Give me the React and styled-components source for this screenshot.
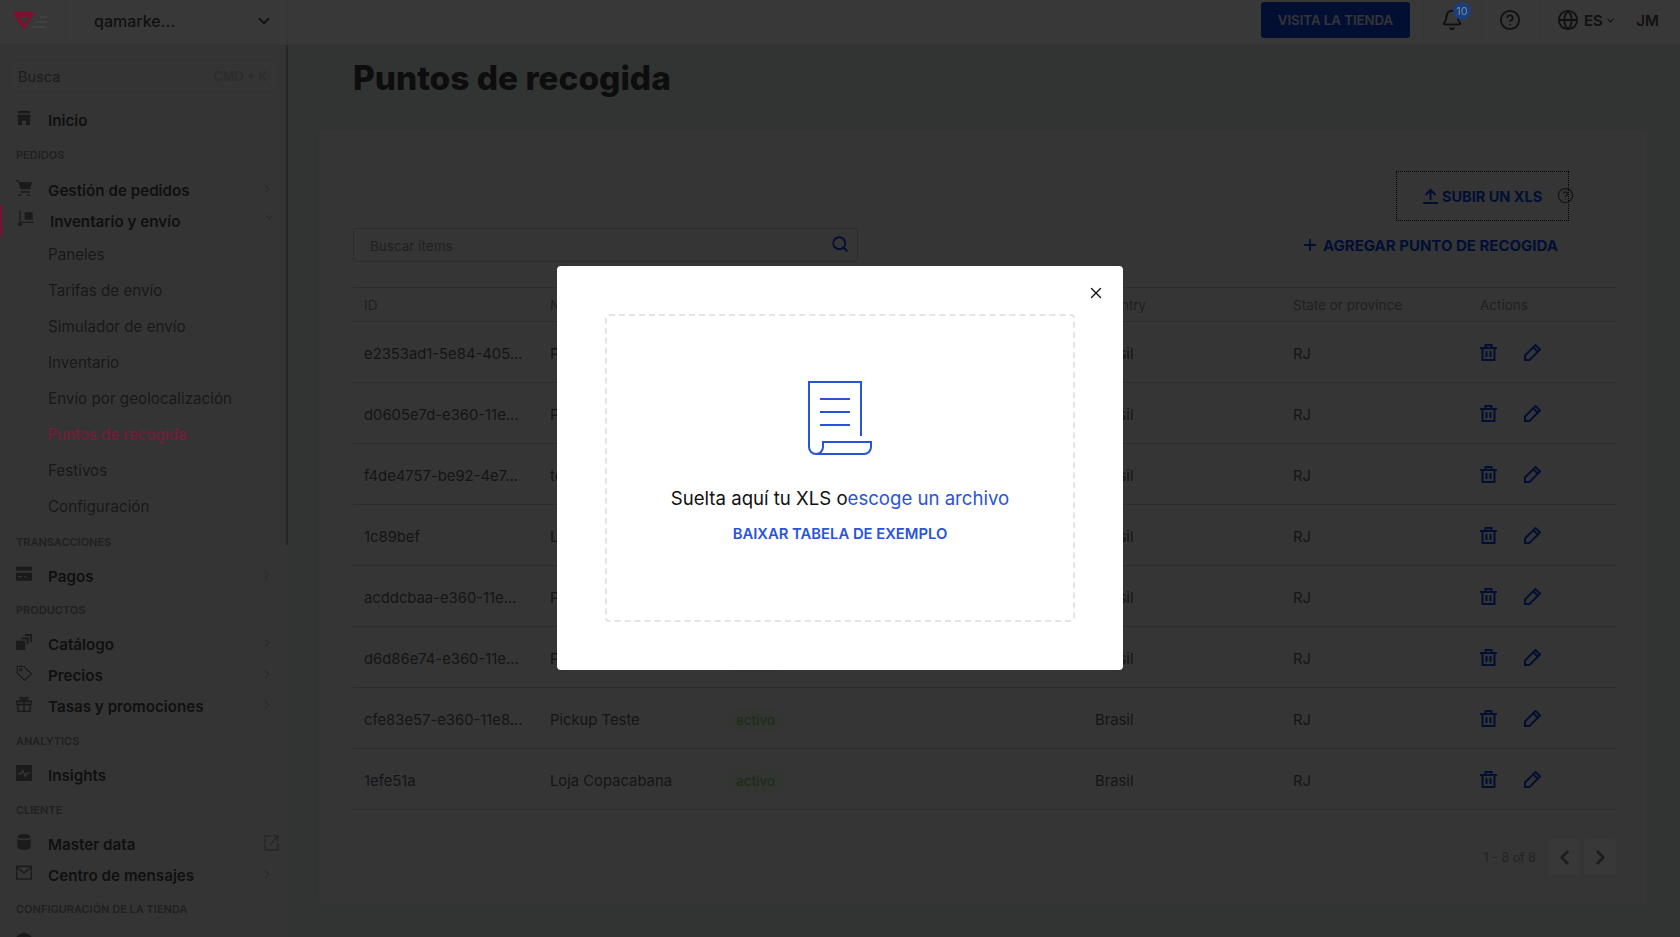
import styled, { createGlobalStyle } from "styled-components";
import { ChevronDown, ChevronRight, ChevronLeft, Search, X, Globe, CircleHelp, Bell, Plus } from "lucide-react";

const GlobalStyle = createGlobalStyle`
  html, body { margin: 0; padding: 0; height: 100%; overflow: hidden; }
  body { font-family: Inter, "Noto Sans", sans-serif; background: #e4ece8; color: #4d4d4d; }
  * { box-sizing: border-box; }
`;

const ICONS = {
  shop: <path fill="currentColor" d="M3 1h18v4H3zM2 7h20v4H21v12h-6v-7H9v7H3V11H2z" />,
  cart: <path fill="currentColor" d="M0 0h4l1 3h19l-3 11H7L3 2H0zM7 17h14v2H7zM8 24a2.4 2.4 0 1 1 0-.1zM21 24a2.4 2.4 0 1 1 0-.1z" />,
  shelves: <path fill="currentColor" d="M2 0h2v18H2zM10 2h12v11H10zM5 16h19v2H5zM3 23a3 3 0 1 1 0-6 3 3 0 0 1 0 6z" />,
  card: <path fill="currentColor" d="M0 1h24v6H0zM0 10h24v12H0zM3 15v2h6v-2zM12 15v2h3v-2z" />,
  catalog: <g fill="currentColor"><path d="M0 10h14v14H0z" /><path d="M8 5h11v10h-3V8H8zM13 0h11v12h-3V3h-8z" /></g>,
  tag: <g fill="none" stroke="currentColor" strokeWidth="2"><path d="M2 2h10l11 11-10 10L2 12z" /><circle cx="7" cy="7" r="1.5" /></g>,
  gift: <g fill="none" stroke="currentColor" strokeWidth="2.4"><path d="M1 8h22v5H1zM3 13v10h18V13M12 8v15M12 7C6 7 5 2 8 2s4 3 4 5zm0 0c6 0 7-5 4-5s-4 3-4 5z" /></g>,
  insights: <g><path fill="currentColor" d="M0 0h24v24H0z" /><path fill="none" stroke="#ffffff" strokeWidth="1.8" d="M3 13h5l2-5 4 9 2-5h5" /></g>,
  data: <path fill="currentColor" d="M12 0c6 0 10 1.5 10 3.5S18 7 12 7 2 5.500 2 3.500 6 0 12 0zM2 7c2 1.500 6 2.500 10 2.500S20 8.500 22 7v13c0 2-4 4-10 4S2 22 2 20z" />,
  mail: <path fill="none" stroke="currentColor" strokeWidth="2.4" d="M1 2h22v19H1zM1 3l11 9 11-9" />,
  cube: <path fill="currentColor" d="M12 0l11 6v12l-11 6-11-6V6z" />,
};

const SECTIONS = [
  { items: [{ icon: "shop", label: "Inicio" }] },
  {
    title: "PEDIDOS",
    h: 39,
    items: [
      { icon: "cart", label: "Gestión de pedidos", more: true },
      {
        icon: "shelves",
        label: "Inventario y envío",
        open: true,
        children: [
          "Paneles",
          "Tarifas de envío",
          "Simulador de envío",
          "Inventario",
          "Envío por geolocalización",
          "Puntos de recogida",
          "Festivos",
          "Configuración",
        ],
      },
    ],
  },
  { title: "TRANSACCIONES", h: 37, items: [{ icon: "card", label: "Pagos", more: true }] },
  {
    title: "PRODUCTOS",
    h: 37,
    items: [
      { icon: "catalog", label: "Catálogo", more: true },
      { icon: "tag", label: "Precios", more: true },
      { icon: "gift", label: "Tasas y promociones", more: true },
    ],
  },
  { title: "ANALYTICS", h: 38, items: [{ icon: "insights", label: "Insights" }] },
  {
    title: "CLIENTE",
    h: 38,
    items: [
      { icon: "data", label: "Master data", external: true },
      { icon: "mail", label: "Centro de mensajes", more: true },
    ],
  },
  { title: "CONFIGURACIÓN DE LA TIENDA", h: 36, items: [{ icon: "cube", label: "" }] },
];

const ROWS = [
  ["e2353ad1-5e84-405...", "Pickup Barra", "Brasil"],
  ["d0605e7d-e360-11e...", "Pickup Centro", "Brasil"],
  ["f4de4757-be92-4e7...", "teste", "Brasil"],
  ["1c89bef", "Loja Leblon", "Brasil"],
  ["acddcbaa-e360-11e...", "Pickup Tijuca", "Brasil"],
  ["d6d86e74-e360-11e...", "Pickup Ipanema", "Brasil"],
  ["cfe83e57-e360-11e8...", "Pickup Teste", "Brasil"],
  ["1efe51a", "Loja Copacabana", "Brasil"],
];

function Logo() {
  return (
    <LogoMark width="33" height="17" viewBox="0 0 33 17">
      <path fill="#7d1230" fillRule="evenodd" d="M0 0h21l-10 17h-2L0 3zM6 5l4.500 7L15 5z" />
      <path stroke="#4a4a4a" strokeWidth="1" d="M26 5h7M21 10h12M17 15h15" />
    </LogoMark>
  );
}

function TrashIcon() {
  return (
    <svg width="17" height="17" viewBox="0 0 17 17" fill="none" stroke="currentColor" strokeWidth="2">
      <path d="M0 4h17M5.500 4V1h6v3M2.500 4v12h12V4M6.500 7v6M10.500 7v6" />
    </svg>
  );
}

function PencilIcon() {
  return (
    <svg width="17" height="17" viewBox="0 0 17 17" fill="none" stroke="currentColor" strokeWidth="2">
      <path d="M1 16v-4.500L11.500 1 16 5.500 5.500 16zM9.500 3.500l4 4" />
    </svg>
  );
}

function UploadIcon() {
  return (
    <svg width="15" height="16" viewBox="0 0 15 16" fill="none" stroke="currentColor" strokeWidth="2">
      <path d="M0 15h15M7.500 12V2M2.500 7l5-5 5 5" />
    </svg>
  );
}

function ExternalIcon() {
  return (
    <svg width="15" height="16" viewBox="0 0 15 16" fill="none" stroke="currentColor" strokeWidth="1.300">
      <path d="M7 1H1v14h13V8M6 10l8-9M9 1h5v5" />
    </svg>
  );
}

function ScrollIcon() {
  return (
    <svg width="64" height="74" viewBox="0 0 64 74" fill="none" stroke="#2953da" strokeWidth="2">
      <path d="M53 55V1H1v65a7 7 0 0 0 14 0v-5h48v5a7 7 0 0 1-7 7H8" />
      <path d="M12 18h30M12 31h30M12 44h30" />
    </svg>
  );
}

export default function App() {
  return (
    <>
      <GlobalStyle />
      <Page>
        <TopBar>
          <LogoCell>
            <Logo />
          </LogoCell>
          <AccountCell>
            <AccountName>qamarke...</AccountName>
            <ChevronDown size={18} strokeWidth={2.4} />
          </AccountCell>
          <Spacer />
          <StoreButton>VISITA LA TIENDA</StoreButton>
          <IconCell>
            <Bell size={22} strokeWidth={2.2} />
            <Badge>10</Badge>
          </IconCell>
          <IconCell>
            <CircleHelp size={22} strokeWidth={2} />
          </IconCell>
          <LangCell>
            <Globe size={22} strokeWidth={2} />
            <span>ES</span>
            <LangChevron size={11} strokeWidth={2.4} />
          </LangCell>
          <UserCell>JM</UserCell>
        </TopBar>
        <Body>
          <Sidebar>
            <ScrollThumb />
            <SearchBox>
              <span>Busca</span>
              <Shortcut>CMD + K</Shortcut>
            </SearchBox>
            {SECTIONS.map((section, i) => (
              <div key={i}>
                {section.title && <SectionLabel $h={section.h}>{section.title}</SectionLabel>}
                {section.items.map((item) => (
                  <div key={item.icon}>
                    <NavRow $open={item.open}>
                      <NavIcon viewBox="0 0 24 24">{ICONS[item.icon]}</NavIcon>
                      <NavText>{item.label}</NavText>
                      {item.more && (
                        <NavArrow>
                          <ChevronRight size={14} strokeWidth={1.6} />
                        </NavArrow>
                      )}
                      {item.open && (
                        <NavArrow $down>
                          <ChevronDown size={14} strokeWidth={1.6} />
                        </NavArrow>
                      )}
                      {item.external && (
                        <ExternalSlot>
                          <ExternalIcon />
                        </ExternalSlot>
                      )}
                    </NavRow>
                    {item.children && (
                      <SubList>
                        {item.children.map((child) => (
                          <SubItem key={child} $active={child === "Puntos de recogida"}>
                            {child}
                          </SubItem>
                        ))}
                      </SubList>
                    )}
                  </div>
                ))}
              </div>
            ))}
          </Sidebar>
          <Main>
            <Title>Puntos de recogida</Title>
            <Card>
              <UploadRow>
                <UploadBox>
                  <UploadIcon />
                  <span>SUBIR UN XLS</span>
                  <UploadHelp>
                    <CircleHelp size={17} strokeWidth={2} />
                  </UploadHelp>
                </UploadBox>
              </UploadRow>
              <Toolbar>
                <SearchField>
                  <span>Buscar ítems</span>
                  <Search size={18} strokeWidth={2.4} />
                </SearchField>
                <AddButton>
                  <Plus size={18} strokeWidth={2.4} />
                  <span>AGREGAR PUNTO DE RECOGIDA</span>
                </AddButton>
              </Toolbar>
              <HeadRow>
                <div>ID</div>
                <div>Name</div>
                <div>Status</div>
                <div>Country</div>
                <div>State or province</div>
                <div>Actions</div>
              </HeadRow>
              {ROWS.map((row) => (
                <TableRow key={row[0]}>
                  <div>{row[0]}</div>
                  <div>{row[1]}</div>
                  <div>
                    <StatusPill>activo</StatusPill>
                  </div>
                  <div>{row[2]}</div>
                  <div>RJ</div>
                  <Actions>
                    <TrashIcon />
                    <PencilIcon />
                  </Actions>
                </TableRow>
              ))}
              <Pagination>
                <PageCount>1 - 8 of 8</PageCount>
                <PageButton>
                  <ChevronLeft size={23} strokeWidth={2.8} />
                </PageButton>
                <PageButton>
                  <ChevronRight size={23} strokeWidth={2.8} />
                </PageButton>
              </Pagination>
            </Card>
          </Main>
        </Body>
      </Page>
      <Overlay>
        <Modal>
          <CloseButton>
            <X size={18} strokeWidth={1.8} />
          </CloseButton>
          <DropZone>
            <ScrollIcon />
            <DropText>
              Suelta aquí tu XLS o<DropLink>escoge un archivo</DropLink>
            </DropText>
            <SampleLink>BAIXAR TABELA DE EXEMPLO</SampleLink>
          </DropZone>
        </Modal>
      </Overlay>
    </>
  );
}

const Page = styled.div`
  width: 1680px;
  height: 937px;
  display: flex;
  flex-direction: column;
  overflow: hidden;
`;

const TopBar = styled.header`
  height: 45px;
  flex: none;
  display: flex;
  align-items: stretch;
  background: #ffffff;
  border-bottom: 1px solid #f0f0f0;
`;

const LogoCell = styled.div`
  width: 66px;
  display: flex;
  align-items: center;
  padding: 0 0 7px 14px;
  border-right: 1px solid #f0f0f0;
`;

const LogoMark = styled.svg`
  position: relative;
  z-index: 11;
  margin-top: 4px;
`;

const AccountCell = styled.div`
  width: 222px;
  display: flex;
  align-items: center;
  justify-content: space-between;
  padding: 0 14px 2px 28px;
  border-right: 1px solid #f0f0f0;
  color: #4d4d4d;
`;

const AccountName = styled.span`
  font-size: 16px;
  font-weight: 500;
`;

const Spacer = styled.div`
  flex: 1;
`;

const StoreButton = styled.div`
  align-self: flex-start;
  margin: 2px 13px 0 0;
  width: 149px;
  height: 36px;
  display: flex;
  align-items: center;
  justify-content: center;
  background: #0944e8;
  border-radius: 3px;
  color: #eeeeee;
  font-size: 13.200px;
  font-weight: 600;
`;

const IconCell = styled.div`
  position: relative;
  width: 58px;
  display: flex;
  align-items: center;
  justify-content: center;
  padding: 0 2px 4px 0;
  border-left: 1px solid #f0f0f0;
  color: #4d4d4d;
`;

const Badge = styled.span`
  position: absolute;
  z-index: 11;
  top: 2px;
  left: 29px;
  width: 18px;
  height: 18px;
  border-radius: 50%;
  display: flex;
  align-items: center;
  justify-content: center;
  background: #1d3f76;
  color: #6a88b5;
  font-size: 11px;
`;

const LangCell = styled.div`
  width: 85px;
  display: flex;
  align-items: center;
  gap: 5px;
  padding: 0 0 4px 17px;
  border-left: 1px solid #f0f0f0;
  color: #4d4d4d;
  font-size: 15px;
  font-weight: 600;
`;

const LangChevron = styled(ChevronDown)`
  margin-left: -3px;
`;

const UserCell = styled.div`
  width: 56px;
  display: flex;
  align-items: center;
  justify-content: center;
  padding: 0 9px 4px 0;
  color: #4d4d4d;
  font-size: 15px;
  font-weight: 600;
`;

const Body = styled.div`
  flex: 1;
  display: flex;
  min-height: 0;
`;

const Sidebar = styled.nav`
  position: relative;
  width: 289px;
  flex: none;
  overflow: hidden;
  background: #eeeeee;
  padding-top: 14px;
`;

const ScrollThumb = styled.div`
  position: absolute;
  top: 0;
  right: 1px;
  width: 2px;
  height: 500px;
  background: #a8a8a8;
`;

const SearchBox = styled.div`
  margin: 0 9px 12px;
  width: 270px;
  height: 34px;
  display: flex;
  align-items: center;
  justify-content: space-between;
  padding: 0 11px 0 8px;
  border: 1px solid #e0e0e0;
  border-radius: 3px;
  font-size: 14.500px;
  color: #7f7f7f;
`;

const Shortcut = styled.span`
  font-size: 12.500px;
  font-weight: 600;
  color: #c8c8c8;
`;

const SectionLabel = styled.div`
  height: ${(p) => p.$h}px;
  display: flex;
  align-items: center;
  padding: 0 0 1px 16px;
  font-size: 11px;
  font-weight: 600;
  color: #909090;
  white-space: nowrap;
`;

const NavRow = styled.div`
  position: relative;
  height: 31px;
  display: flex;
  align-items: center;
  padding-left: 16px;
  color: #4a4a4a;

  ${(p) =>
    p.$open &&
    `
    &::before {
      content: "";
      position: absolute;
      z-index: 11;
      left: 0;
      top: -1px;
      width: 2px;
      height: 31px;
      background: #7a1232;
    }
    padding-left: 18px;
  `}
`;

const NavIcon = styled.svg`
  width: 16px;
  height: 16px;
  flex: none;
  margin: -6px 16px 0 0;
  color: #7a7a7a;
`;

const NavText = styled.span`
  font-size: 15.200px;
  font-weight: 600;
  white-space: nowrap;
`;

const NavArrow = styled.span`
  position: absolute;
  right: ${(p) => (p.$down ? "13px" : "15px")};
  top: ${(p) => (p.$down ? "4px" : "7px")};
  display: flex;
  color: #9a9a9a;
`;

const ExternalSlot = styled.span`
  position: absolute;
  right: 10px;
  top: 6px;
  display: flex;
  color: #a8a8a8;
`;

const SubList = styled.div`
  margin-top: -1px;
`;

const SubItem = styled.div`
  position: relative;
  ${(p) => p.$active && "z-index: 11;"}
  height: 36px;
  display: flex;
  align-items: center;
  padding-left: 48px;
  font-size: 15.200px;
  color: ${(p) => (p.$active ? "#85183a" : "#707070")};
  white-space: nowrap;
`;

const Main = styled.main`
  flex: 1;
  min-width: 0;
  background: #e4ece8;
  padding-left: 30px;
  padding-right: 33px;
`;

const Title = styled.h1`
  margin: 0;
  height: 85px;
  padding: 13px 0 0 34px;
  font-size: 33.400px;
  line-height: 40px;
  font-weight: 800;
  color: #3b3b3b;
`;

const Card = styled.section`
  height: 775px;
  background: #f1f1f1;
  border-radius: 4px;
  padding: 41px 31px 0 34px;
`;

const UploadRow = styled.div`
  display: flex;
  justify-content: flex-end;
  padding-right: 47px;
`;

const UploadBox = styled.div`
  position: relative;
  width: 173px;
  height: 50px;
  display: flex;
  align-items: center;
  gap: 4px;
  padding-left: 26px;
  border: 1px dotted #000000;
  color: #0944e8;
  font-size: 14.500px;
  font-weight: 700;
`;

const UploadHelp = styled.span`
  position: absolute;
  left: 160px;
  top: 15px;
  display: flex;
  color: #6a6a6a;
`;

const Toolbar = styled.div`
  margin-top: 7px;
  height: 34px;
  display: flex;
  align-items: center;
  justify-content: space-between;
  padding-right: 58px;
`;

const SearchField = styled.div`
  width: 505px;
  height: 34px;
  display: flex;
  align-items: center;
  justify-content: space-between;
  padding: 1px 8px 0 16px;
  border: 1px solid #c8c8c8;
  border-radius: 3px;
  font-size: 13.500px;
  color: #909090;

  svg {
    color: #0944e8;
    margin-bottom: 4px;
  }
`;

const AddButton = styled.div`
  display: flex;
  align-items: center;
  gap: 4px;
  color: #0944e8;
  font-size: 15px;
  font-weight: 700;
`;

const tableGrid = `
  display: grid;
  grid-template-columns: 186px 176px 369px 198px 187px 1fr;
  align-items: center;
  padding-left: 11px;
  border-bottom: 1px solid #c8c8c8;
`;

const HeadRow = styled.div`
  ${tableGrid}
  margin-top: 25px;
  height: 35px;
  border-top: 1px solid #c8c8c8;
  font-size: 13.500px;
  color: #909090;
`;

const TableRow = styled.div`
  ${tableGrid}
  height: 61px;
  padding-top: 3px;
  font-size: 14.800px;
  color: #5f5f5f;
`;

const StatusPill = styled.span`
  display: inline-flex;
  align-items: center;
  height: 24px;
  padding: 0 10px;
  border-radius: 12px;
  background: #e4f0df;
  font-size: 13.500px;
  font-weight: 500;
  color: #8fcc70;
`;

const Actions = styled.div`
  display: flex;
  gap: 27px;
  margin-bottom: 3px;
  color: #0944e8;
`;

const Pagination = styled.div`
  margin-top: 29px;
  display: flex;
  align-items: center;
  justify-content: flex-end;
  gap: 4px;
`;

const PageCount = styled.span`
  margin-right: 8px;
  font-size: 12.500px;
  color: #a0a0a0;
`;

const PageButton = styled.div`
  width: 32px;
  height: 36px;
  display: flex;
  align-items: center;
  justify-content: center;
  background: #ffffff;
  border-radius: 3px;
  color: #808080;
`;

const Overlay = styled.div`
  position: fixed;
  inset: 0;
  z-index: 10;
  display: flex;
  align-items: center;
  justify-content: center;
  background: rgba(0, 0, 0, 0.78);
  backdrop-filter: blur(0.5px);
`;

const Modal = styled.div`
  position: relative;
  width: 566px;
  height: 404px;
  margin-top: -1px;
  padding: 48px;
  background: #ffffff;
  border-radius: 4px;
`;

const CloseButton = styled.div`
  position: absolute;
  top: 18px;
  right: 18px;
  display: flex;
  color: #111111;
`;

const DropZone = styled.div`
  height: 308px;
  display: flex;
  flex-direction: column;
  align-items: center;
  padding-top: 65px;
  border: 2px dashed #e3e4e6;
  border-radius: 4px;
`;

const DropText = styled.div`
  margin-top: 31px;
  font-size: 18.600px;
  line-height: 24px;
  color: #111111;
`;

const DropLink = styled.span`
  color: #2953da;
`;

const SampleLink = styled.div`
  margin-top: 14px;
  font-size: 14.800px;
  line-height: 20px;
  font-weight: 600;
  color: #2953da;
`;
